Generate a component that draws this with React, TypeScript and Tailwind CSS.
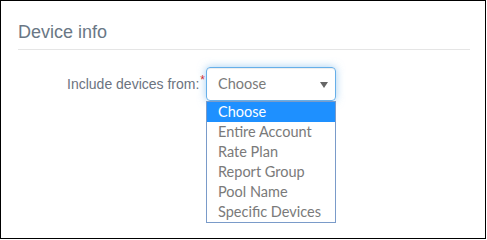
import React from "react";

const items = ["Choose", "Entire Account", "Rate Plan", "Report Group", "Pool Name", "Specific Devices"];

export default function App() {
  return (
    <div className="w-[487px] h-[240px] bg-white">
      <div className="w-[486px] h-[239px] border border-black bg-white pl-[17px] pr-[15px] pt-[21px]">
        <div className="text-[18px] leading-[20px] text-[#6a7785] pb-[7px] border-b border-[#e5e5e5]" style={{ fontFamily: '"Liberation Sans", Arial, sans-serif' }}>
          Device info
        </div>
        <div className="flex pt-[17px]">
          <div className="w-[188px] flex justify-end items-start pt-[9px] pr-[1px]">
            <span className="text-[14px] leading-[16px] text-[#6b7380]" style={{ fontFamily: '"Liberation Sans", Arial, sans-serif' }}>
              Include devices from:
            </span>
            <span className="text-[#e02020] text-[12px] leading-[10px] ml-[1px] mt-[-1px]" style={{ fontFamily: '"Liberation Sans", Arial, sans-serif' }}>*</span>
          </div>
          <div className="flex flex-col w-[130px]">
            <div className="h-[34px] border border-[#66afe9] rounded-[4px] shadow-[inset_0_1px_1px_rgba(0,0,0,0.075),0_0_8px_rgba(102,175,233,0.6)] flex items-center pl-[11px] pr-[7px] justify-between" style={{ fontFamily: 'Lato, "Noto Sans", sans-serif' }}>
              <span className="text-[14.5px] text-[#7a7a7a]">Choose</span>
              <svg width="8" height="6" viewBox="0 0 8 6" className="mb-[-2px]">
                <path d="M0 0 L8 0 L4 6 Z" fill="#666" />
              </svg>
            </div>
            <div className="border border-[#7a9bc9] bg-white" style={{ fontFamily: 'Lato, "Noto Sans", sans-serif' }}>
              {items.map((it, i) => (
                <div
                  key={it}
                  className={
                    i === 0
                      ? "h-[20px] leading-[20px] pl-[11px] text-[14.5px] bg-[#1e90ff] text-white"
                      : "h-[20px] leading-[20px] pl-[11px] text-[14.5px] text-[#7a7a7a]"
                  }
                >
                  {it}
                </div>
              ))}
            </div>
          </div>
        </div>
      </div>
    </div>
  );
}
